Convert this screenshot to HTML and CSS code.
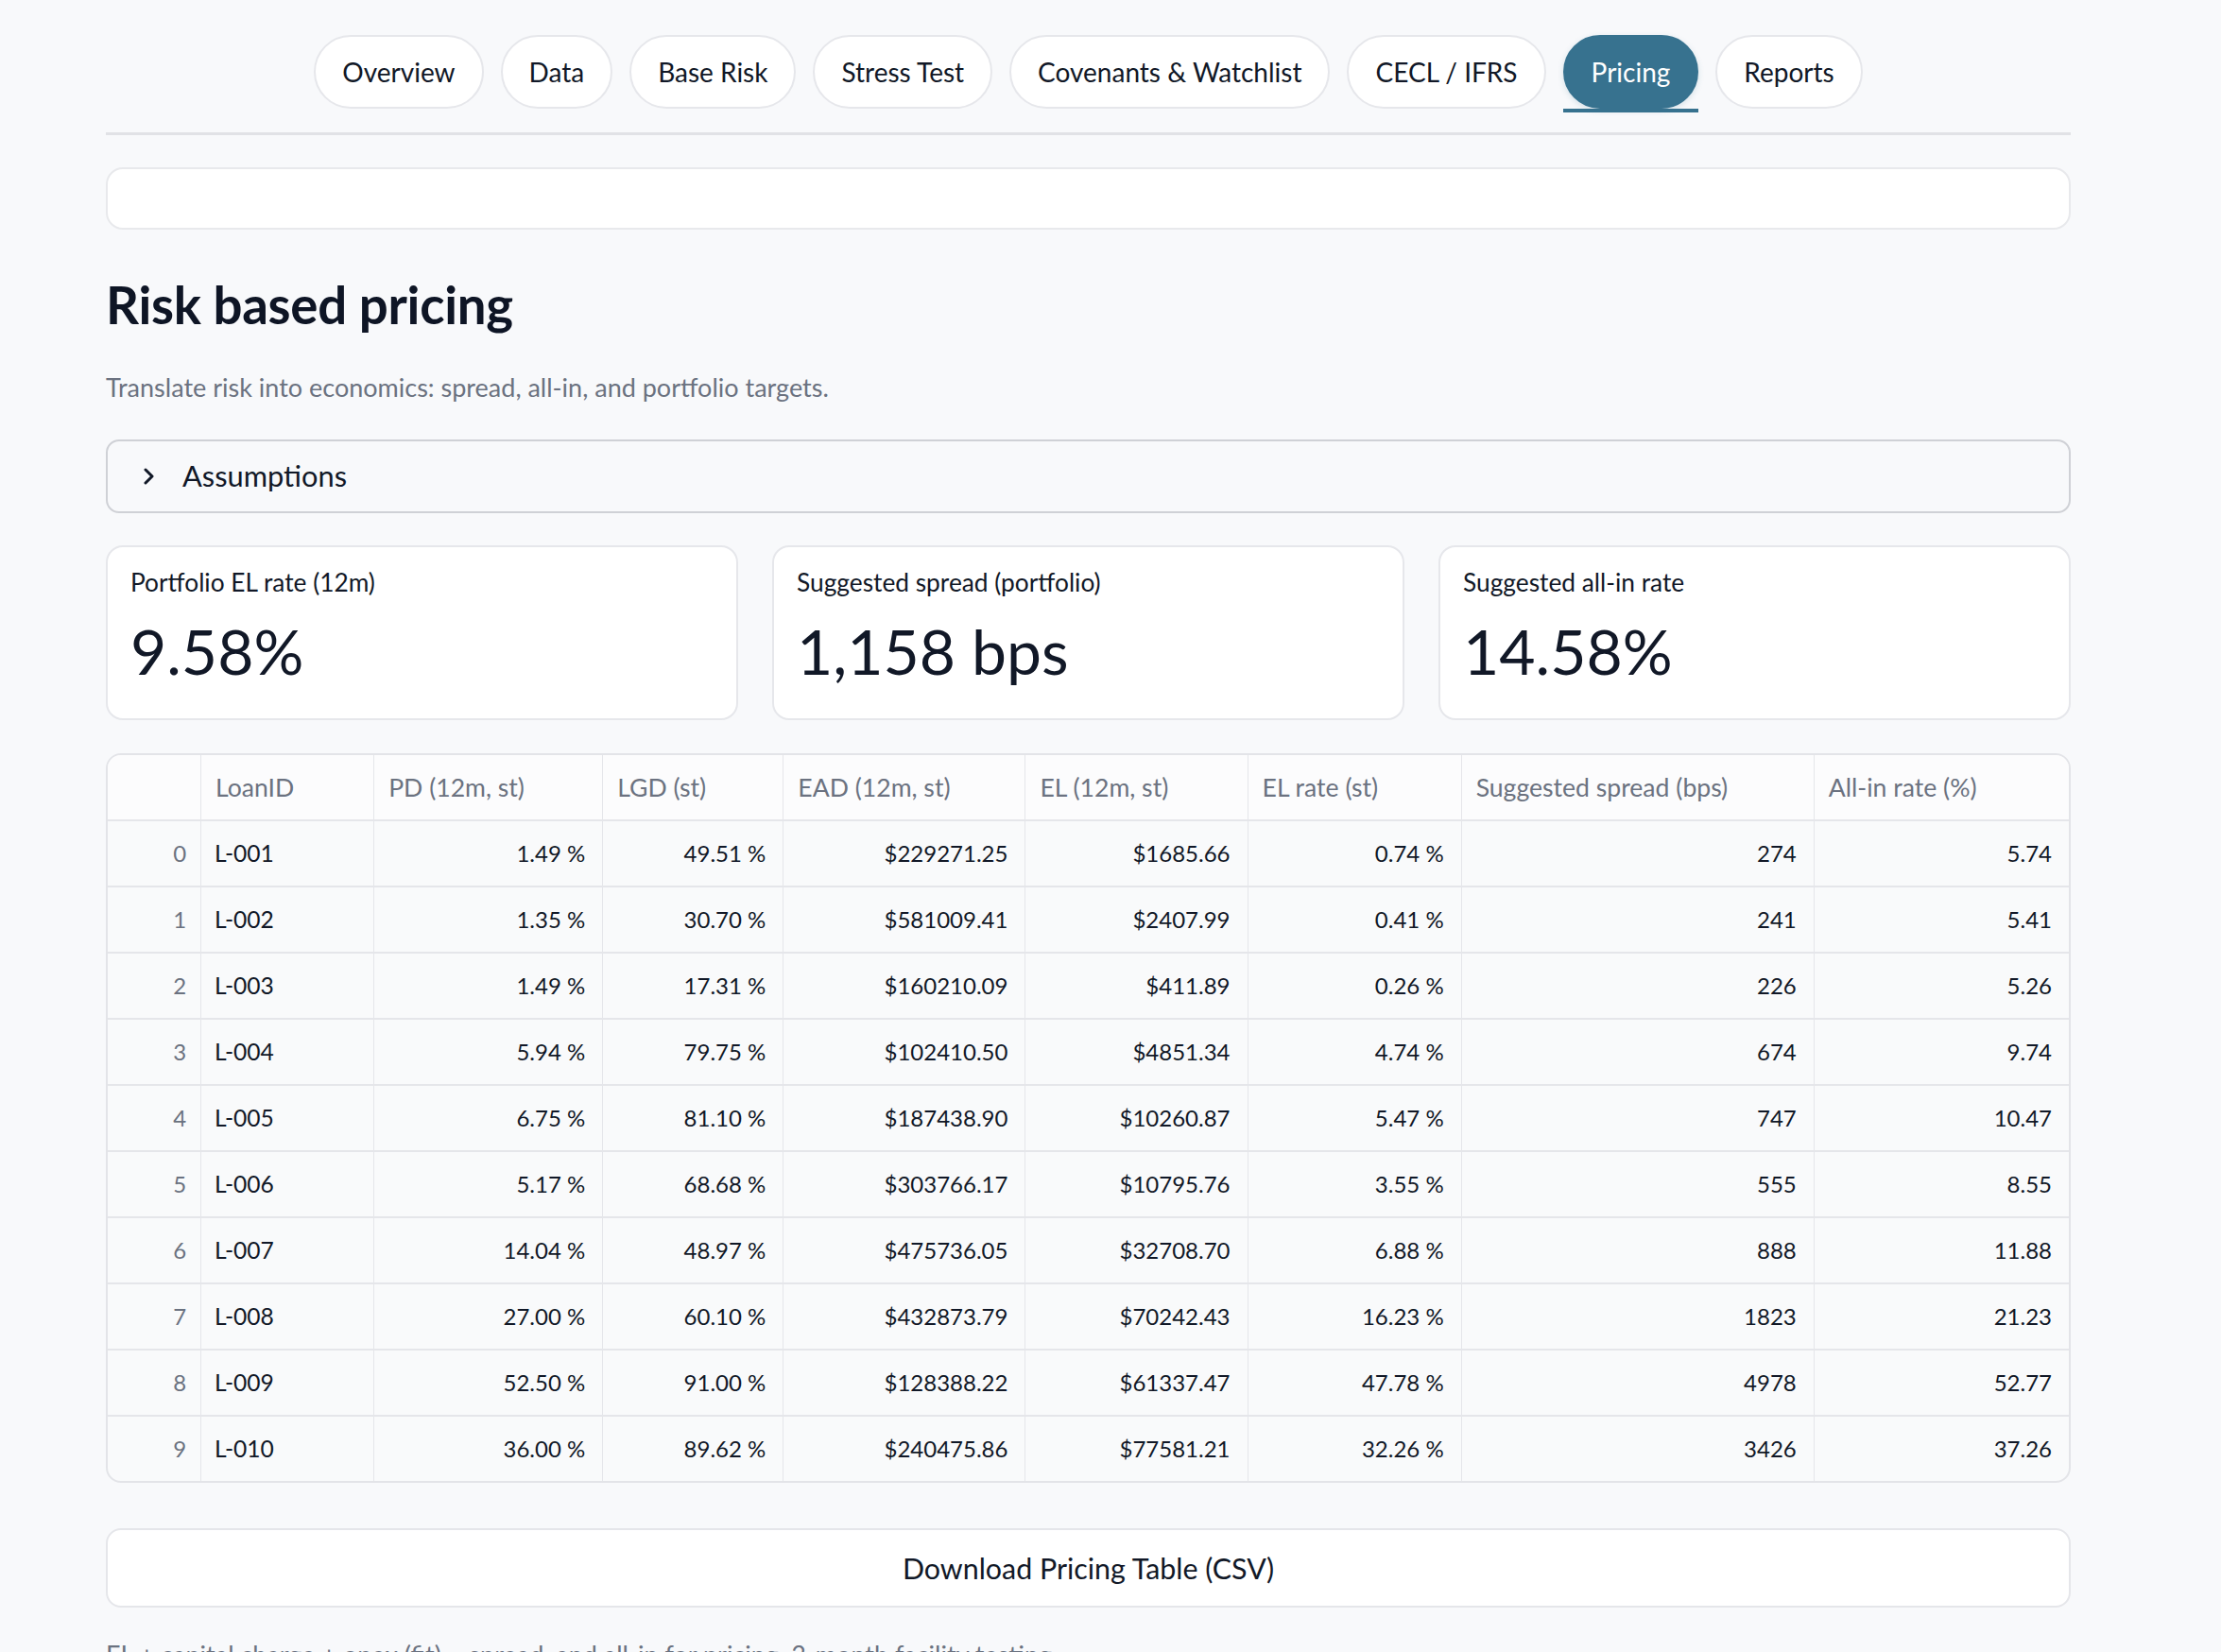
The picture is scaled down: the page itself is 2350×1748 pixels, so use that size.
FILE: index.html
```html
<!DOCTYPE html>
<html lang="en">
<head>
<meta charset="utf-8">
<title>Risk based pricing</title>
<link rel="stylesheet" href="styles.css">
</head>
<body>
<div class="page">
  <nav class="tabbar">
    <div class="tab">Overview</div>
    <div class="tab">Data</div>
    <div class="tab">Base Risk</div>
    <div class="tab">Stress Test</div>
    <div class="tab">Covenants &amp; Watchlist</div>
    <div class="tab">CECL / IFRS</div>
    <div class="tab active">Pricing</div>
    <div class="tab">Reports</div>
  </nav>

  <div class="empty-box"></div>

  <h2 class="title">Risk based pricing</h2>
  <p class="subtitle">Translate risk into economics: spread, all-in, and portfolio targets.</p>

  <div class="expander">
    <svg class="chev" width="14" height="20" viewBox="0 0 14 20"><polyline points="3,3 10,10 3,17" fill="none" stroke="#111827" stroke-width="3" stroke-linecap="round" stroke-linejoin="round"/></svg>
    <span class="exp-label">Assumptions</span>
  </div>

  <div class="metrics">
    <div class="metric">
      <div class="m-label">Portfolio EL rate (12m)</div>
      <div class="m-value">9.58%</div>
    </div>
    <div class="metric">
      <div class="m-label">Suggested spread (portfolio)</div>
      <div class="m-value">1,158 bps</div>
    </div>
    <div class="metric">
      <div class="m-label">Suggested all-in rate</div>
      <div class="m-value">14.58%</div>
    </div>
  </div>

  <div class="grid-wrap">
    <table class="grid">
      <colgroup>
        <col class="c0"><col class="c1"><col class="c2"><col class="c3"><col class="c4"><col class="c5"><col class="c6"><col class="c7"><col class="c8">
      </colgroup>
      <thead>
        <tr>
          <th></th><th>LoanID</th><th>PD (12m, st)</th><th>LGD (st)</th><th>EAD (12m, st)</th><th>EL (12m, st)</th><th>EL rate (st)</th><th>Suggested spread (bps)</th><th>All-in rate (%)</th>
        </tr>
      </thead>
      <tbody>
        <tr><td class="idx">0</td><td class="txt">L-001</td><td>1.49 %</td><td>49.51 %</td><td>$229271.25</td><td>$1685.66</td><td>0.74 %</td><td>274</td><td>5.74</td></tr>
        <tr><td class="idx">1</td><td class="txt">L-002</td><td>1.35 %</td><td>30.70 %</td><td>$581009.41</td><td>$2407.99</td><td>0.41 %</td><td>241</td><td>5.41</td></tr>
        <tr><td class="idx">2</td><td class="txt">L-003</td><td>1.49 %</td><td>17.31 %</td><td>$160210.09</td><td>$411.89</td><td>0.26 %</td><td>226</td><td>5.26</td></tr>
        <tr><td class="idx">3</td><td class="txt">L-004</td><td>5.94 %</td><td>79.75 %</td><td>$102410.50</td><td>$4851.34</td><td>4.74 %</td><td>674</td><td>9.74</td></tr>
        <tr><td class="idx">4</td><td class="txt">L-005</td><td>6.75 %</td><td>81.10 %</td><td>$187438.90</td><td>$10260.87</td><td>5.47 %</td><td>747</td><td>10.47</td></tr>
        <tr><td class="idx">5</td><td class="txt">L-006</td><td>5.17 %</td><td>68.68 %</td><td>$303766.17</td><td>$10795.76</td><td>3.55 %</td><td>555</td><td>8.55</td></tr>
        <tr><td class="idx">6</td><td class="txt">L-007</td><td>14.04 %</td><td>48.97 %</td><td>$475736.05</td><td>$32708.70</td><td>6.88 %</td><td>888</td><td>11.88</td></tr>
        <tr><td class="idx">7</td><td class="txt">L-008</td><td>27.00 %</td><td>60.10 %</td><td>$432873.79</td><td>$70242.43</td><td>16.23 %</td><td>1823</td><td>21.23</td></tr>
        <tr><td class="idx">8</td><td class="txt">L-009</td><td>52.50 %</td><td>91.00 %</td><td>$128388.22</td><td>$61337.47</td><td>47.78 %</td><td>4978</td><td>52.77</td></tr>
        <tr><td class="idx">9</td><td class="txt">L-010</td><td>36.00 %</td><td>89.62 %</td><td>$240475.86</td><td>$77581.21</td><td>32.26 %</td><td>3426</td><td>37.26</td></tr>
      </tbody>
    </table>
  </div>

  <div class="download">Download Pricing Table (CSV)</div>

  <p class="note">EL + capital charge + opex (fit) = spread, and all-in for pricing. 3-month facility testing.</p>
</div>
</body>
</html>
```

FILE: styles.css
```css
* { box-sizing: border-box; }

html, body {
  margin: 0;
  padding: 0;
  background: #f8f9fb;
  height: 1748px;
  overflow: hidden;
}

body {
  font-family: "Lato", "Noto Sans", sans-serif;
  color: #111827;
}

.page {
  width: 2079px;
  margin-left: 112px;
}

/* Tabs */
.tabbar {
  display: flex;
  justify-content: center;
  gap: 18px;
  padding-top: 37px;
  padding-bottom: 25px;
  border-bottom: 3px solid #e1e2e6;
}

.tab {
  position: relative;
  height: 78px;
  padding: 0 28px;
  display: flex;
  align-items: center;
  background: #ffffff;
  border: 2px solid #e6e7eb;
  border-radius: 39px;
  font-size: 28px;
  color: #111827;
}

.tab.active {
  background: #37728f;
  border-color: #37728f;
  color: #ffffff;
  box-shadow: 0 2px 6px rgba(55, 114, 143, 0.18);
}

.tab.active::after {
  content: "";
  position: absolute;
  left: -2px;
  right: -2px;
  bottom: -6px;
  height: 4px;
  background: #37728f;
}

/* Empty box */
.empty-box {
  margin-top: 34px;
  height: 66px;
  background: #ffffff;
  border: 2px solid #e8e9ec;
  border-radius: 18px;
}

/* Title */
.title {
  margin: 47px 0 0 0;
  font-size: 54.6px;
  line-height: 1.2;
  font-weight: 700;
  color: #0e1525;
  letter-spacing: -0.3px;
}

.subtitle {
  margin: 38px 0 0 0;
  font-size: 27px;
  line-height: 1.2;
  color: #6b7280;
}

/* Expander */
.expander {
  margin-top: 39px;
  height: 78px;
  border: 2px solid #cfd1d6;
  border-radius: 14px;
  display: flex;
  align-items: center;
  padding-left: 37px;
}

.chev { flex: none; }

.exp-label {
  margin-left: 28px;
  font-size: 30.8px;
  color: #111827;
}

/* Metrics */
.metrics {
  margin-top: 34px;
  display: grid;
  grid-template-columns: 1fr 1fr 1fr;
  gap: 36px;
}

.metric {
  height: 185px;
  background: #ffffff;
  border: 2px solid #e6e7eb;
  border-radius: 18px;
  padding: 22px 24px 0 24px;
}

.m-label {
  font-size: 26.3px;
  line-height: 1.2;
  color: #111827;
}

.m-value {
  margin-top: 17px;
  font-size: 66px;
  line-height: 1.2;
  color: #111827;
}

/* Table */
.grid-wrap {
  margin-top: 35px;
  border: 2px solid #e3e4e8;
  border-radius: 16px;
  overflow: hidden;
  background: #f9fafb;
}

.grid {
  width: 100%;
  table-layout: fixed;
  border-collapse: separate;
  border-spacing: 0;
  font-size: 24px;
}

.c0 { width: 99px; }
.c1 { width: 183px; }
.c2 { width: 242px; }
.c3 { width: 191px; }
.c4 { width: 256px; }
.c5 { width: 235px; }
.c6 { width: 226px; }
.c7 { width: 373px; }
.c8 { width: 269px; }

.grid th,
.grid td {
  height: 70px;
  padding: 0 18px 0 14px;
  border-bottom: 2px solid #e5e6ea;
  border-right: 1px solid #e5e6ea;
  white-space: nowrap;
  overflow: hidden;
}

.grid th:last-child,
.grid td:last-child { border-right: none; }

.grid tbody tr:last-child td { border-bottom: none; height: 68px; }

.grid th {
  background: #fcfcfd;
  text-align: left;
  font-weight: 400;
  font-size: 26.6px;
  padding-left: 15px;
  color: #6b7280;
}

.grid td {
  text-align: right;
  color: #111827;
}

.grid td.txt { text-align: left; font-size: 24.6px; }

.grid td.idx {
  color: #6b7280;
  padding-right: 15px;
}

/* Download */
.download {
  margin-top: 48px;
  height: 84px;
  background: #ffffff;
  border: 2px solid #e5e6ea;
  border-radius: 16px;
  display: flex;
  align-items: center;
  justify-content: center;
  font-size: 30.4px;
  color: #111827;
}

.note {
  margin: 34px 0 0 0;
  font-size: 27px;
  line-height: 1.2;
  color: #6b7280;
}
```
